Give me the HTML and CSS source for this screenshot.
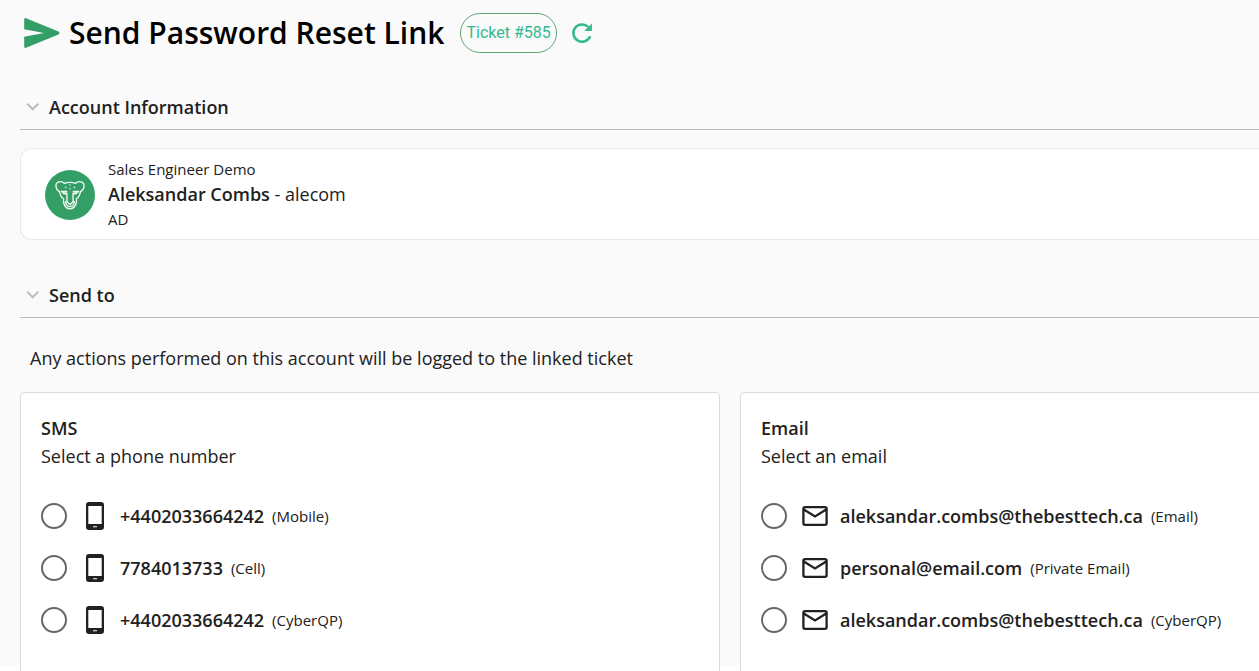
FILE: index.html
```html
<!DOCTYPE html>
<html lang="en">
<head>
<meta charset="utf-8">
<meta name="viewport" content="width=device-width, initial-scale=1">
<title>Send Password Reset Link</title>
<link rel="stylesheet" href="styles.css">
</head>
<body>
<svg class="sprite" width="0" height="0" aria-hidden="true">
  <symbol id="phone" viewBox="0 0 28 28">
    <path fill="currentColor" fill-rule="evenodd" d="M8 0h12a3 3 0 0 1 3 3v22a3 3 0 0 1-3 3H8a3 3 0 0 1-3-3V3a3 3 0 0 1 3-3zM7.300 4v18h13.400V4zM12 24.200v1h4v-1z"/>
  </symbol>
  <symbol id="mail" viewBox="0 0 28 28">
    <path d="M4 5.200H24a1.600 1.600 0 0 1 1.600 1.600V21.200a1.600 1.600 0 0 1-1.600 1.600H4A1.600 1.600 0 0 1 2.400 21.200V6.800A1.600 1.600 0 0 1 4 5.200zM2.800 7.500L14 14.500 25.200 7.500" fill="none" stroke="currentColor" stroke-width="2.300"/>
  </symbol>
  <symbol id="chevron" viewBox="0 0 14 10">
    <path d="M1.200 1.800L6.700 7.300l5.500-5.500" fill="none" stroke="currentColor" stroke-width="2"/>
  </symbol>
</svg>
<div class="shell">
  <header class="title-bar">
    <svg class="send-icon" viewBox="0 0 36 30" aria-hidden="true"><path d="M2 .2L34.500 13.600a1.500 1.500 0 0 1 0 2.800L2 29.800a1.400 1.400 0 0 1-1.800-1.300V18.800L20 15 .2 11.200V1.500A1.400 1.400 0 0 1 2 .2z"/></svg>
    <h1 class="title">Send Password Reset Link</h1>
    <a class="ticket" href="#ticket-585">Ticket #585</a>
    <button class="refresh" type="button" aria-label="Refresh">
      <svg class="refresh-icon" viewBox="0 0 22 22" aria-hidden="true"><path d="M17.300 5A8.700 8.700 0 1 0 19.200 14.200" fill="none" stroke="currentColor" stroke-width="2.500"/><path d="M20.900 1.400V9H13.300l2.400-2.600 2.200-1.800z" fill="currentColor"/></svg>
    </button>
  </header>

  <main>
    <section>
      <button class="section-head" type="button" aria-expanded="true">
        <svg class="chevron" aria-hidden="true"><use href="#chevron"/></svg>
        <span>Account Information</span>
      </button>
      <div class="account">
        <svg class="avatar" viewBox="0 0 52 52" aria-hidden="true">
          <circle cx="26" cy="26" r="26" fill="#339f67"/>
          <g fill="none" stroke="#f4faf2" stroke-width="1.400" stroke-linejoin="round" stroke-linecap="round">
            <path d="M15 22.500C10.500 20 10 13.500 14.500 12.300c2.500-.6 4.500.3 5.500 1.500 4-1.300 8-1.300 12 0 1-1.200 3-2.100 5.500-1.500 4.500 1.200 4 7.700-.5 10.200"/>
            <path d="M15 22.500c1 4.500 1.600 6 4.300 7.400-.8 5.100 2 10.600 6.700 10.600s7.500-5.500 6.700-10.600c2.700-1.400 3.300-2.900 4.300-7.400"/>
            <path d="M22.800 24v9l3.200 3 3.200-3v-9M21.500 33c.3 3 2 5 4.500 5s4.200-2 4.500-5"/>
            <path d="M17 22.500h5.500M35 22.500h-5.500M19 24.300l3 .4M33 24.300l-3 .4" stroke-width="1.600"/>
          </g>
          <g fill="#d9efdf"><circle cx="26" cy="15.600" r=".8"/><circle cx="21.500" cy="18" r=".9"/><circle cx="30.500" cy="18" r=".9"/><circle cx="26" cy="19.500" r=".8"/></g>
        </svg>
        <div class="account-text">
          <p class="small">Sales Engineer Demo</p>
          <p class="account-name"><strong class="strong">Aleksandar Combs</strong> - alecom</p>
          <p class="small">AD</p>
        </div>
      </div>
    </section>

    <section class="send-to">
      <button class="section-head" type="button" aria-expanded="true">
        <svg class="chevron" aria-hidden="true"><use href="#chevron"/></svg>
        <span>Send to</span>
      </button>
      <p class="note">Any actions performed on this account will be logged to the linked ticket</p>
      <div class="cards">
        <fieldset class="card">
          <h2 class="card-title">SMS</h2>
          <p class="card-sub">Select a phone number</p>
          <div class="options">
            <label class="option"><input class="radio" type="radio" name="sms"><svg class="icon" aria-hidden="true"><use href="#phone"/></svg><span class="value">+4402033664242</span><span class="kind">(Mobile)</span></label>
            <label class="option"><input class="radio" type="radio" name="sms"><svg class="icon" aria-hidden="true"><use href="#phone"/></svg><span class="value">7784013733</span><span class="kind">(Cell)</span></label>
            <label class="option"><input class="radio" type="radio" name="sms"><svg class="icon" aria-hidden="true"><use href="#phone"/></svg><span class="value">+4402033664242</span><span class="kind">(CyberQP)</span></label>
          </div>
        </fieldset>
        <fieldset class="card">
          <h2 class="card-title">Email</h2>
          <p class="card-sub">Select an email</p>
          <div class="options">
            <label class="option"><input class="radio" type="radio" name="email"><svg class="icon" aria-hidden="true"><use href="#mail"/></svg><span class="value">aleksandar.combs@thebesttech.ca</span><span class="kind">(Email)</span></label>
            <label class="option"><input class="radio" type="radio" name="email"><svg class="icon" aria-hidden="true"><use href="#mail"/></svg><span class="value">personal@email.com</span><span class="kind">(Private Email)</span></label>
            <label class="option"><input class="radio" type="radio" name="email"><svg class="icon" aria-hidden="true"><use href="#mail"/></svg><span class="value">aleksandar.combs@thebesttech.ca</span><span class="kind">(CyberQP)</span></label>
          </div>
        </fieldset>
      </div>
    </section>
  </main>
</div>
</body>
</html>
```

FILE: styles.css
```css
* { box-sizing: border-box; }
html { background: #fff; }
body {
  margin: 0;
  min-height: 100vh;
  font-family: "Open Sans", "Noto Sans", sans-serif;
  font-size: 18px;
  line-height: 28px;
  color: #212121;
}
h1, h2, p { margin: 0; }
button { font: inherit; color: inherit; background: none; border: 0; padding: 0; cursor: pointer; }
.sprite { position: absolute; }

.shell {
  height: 100vh;
  overflow: hidden;
  padding: 12px 0 0 20px;
  background: linear-gradient(to top, #fff 6px, #fafafa 6px);
}

.title-bar { display: flex; align-items: center; height: 42px; padding-left: 4px; }
.send-icon { width: 36px; height: 30px; margin-right: 9px; fill: #339f67; }
.title { font-size: 30px; line-height: 42px; font-weight: 600; color: #000; }
.ticket {
  height: 40px;
  margin-left: 16px;
  padding: 0 5px;
  border: 1px solid #5fa673;
  border-radius: 20px;
  font: 16px/38px Roboto, sans-serif;
  color: #35b990;
  text-decoration: none;
}
.refresh { display: flex; margin-left: 14px; color: #35b990; }
.refresh-icon { width: 22px; height: 22px; }

.section-head {
  display: flex;
  align-items: center;
  width: 100%;
  margin-top: 32px;
  height: 44px;
  padding: 0 0 2px 6px;
  border-bottom: 1px solid #bdbdbd;
  font-weight: 600;
  text-align: left;
}
.chevron { width: 14px; height: 10px; margin-right: 9px; color: #bdbdbd; }

.account {
  display: flex;
  align-items: center;
  margin-top: 18px;
  padding: 8px 24px 7px;
  border: 1px solid #e8e8e8;
  border-right: 0;
  border-radius: 12px 0 0 12px;
  background: #fff;
}
.avatar { width: 50px; height: 50px; margin-right: 13px; }
.account-text { line-height: 25px; }
.small { font-size: 15px; }
.strong { font-weight: 600; }

.send-to { padding-top: 2px; }
.note { padding: 26px 10px 20px; }
.cards { display: grid; grid-template-columns: repeat(2, minmax(700px, 1fr)); gap: 20px; }
.card { margin: 0; padding: 21px 20px 40px; border: 1px solid #dcdcdc; border-radius: 4px; background: #fff; }
.card-title { font-size: 18px; line-height: 28px; font-weight: 600; }
.options { display: grid; margin-top: 20px; }
.option { display: flex; align-items: center; height: 52px; }
.radio { appearance: none; width: 26px; height: 26px; margin: 0 14px 0 0; border: 2px solid #666; border-radius: 50%; }
.radio:checked { border-width: 8px; }
.icon { width: 28px; height: 28px; margin-right: 11px; }
.value { font-weight: 600; }
.kind { margin-left: 8px; font-size: 15px; }
```
